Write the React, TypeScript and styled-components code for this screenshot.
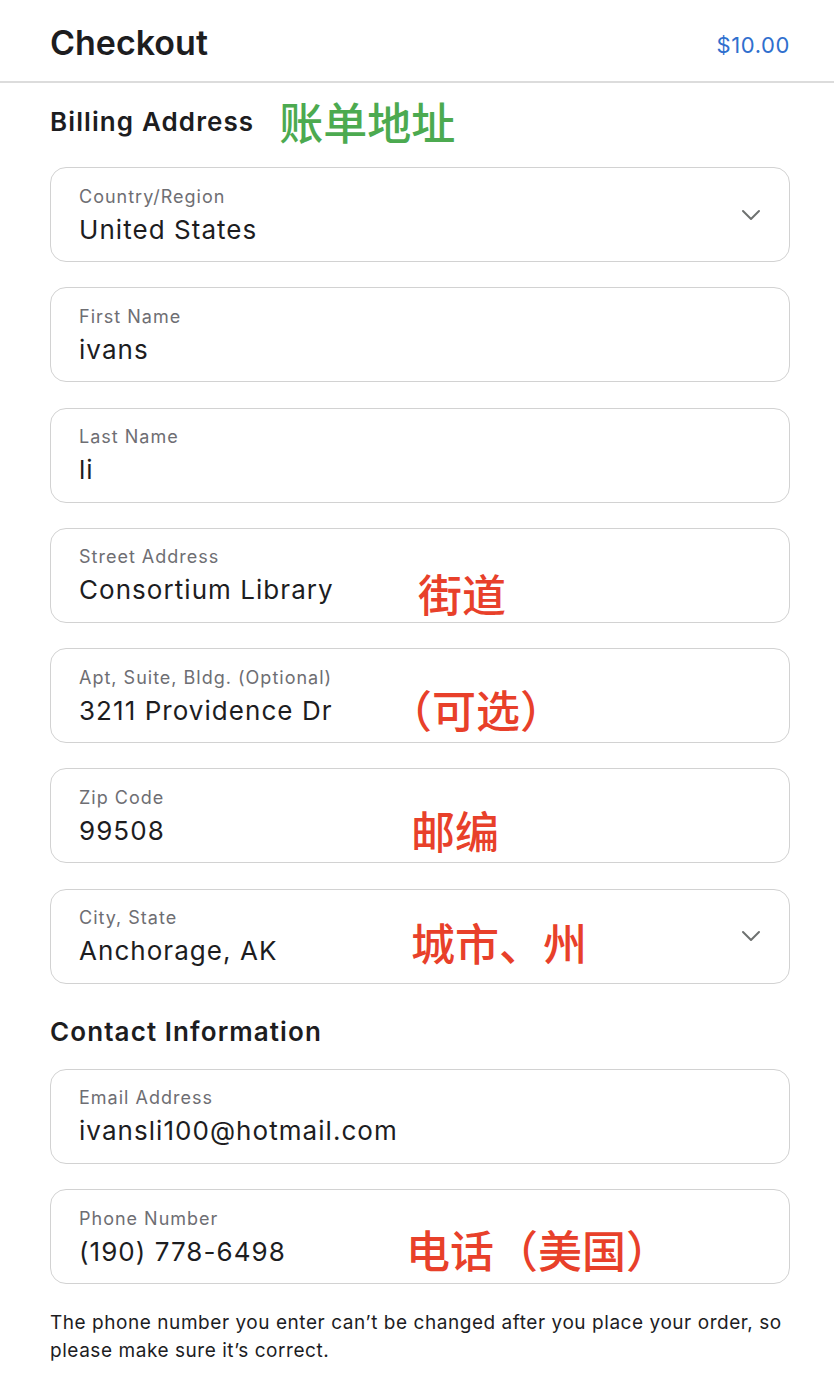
import styled, { createGlobalStyle } from "styled-components";

const GlobalStyle = createGlobalStyle`
  body {
    margin: 0;
    background: #fff;
    font-family: Inter, "Noto Sans", "Liberation Sans", "Noto Sans CJK SC", sans-serif;
    color: #1d1d1f;
  }
`;

const Page = styled.div`
  width: 834px;
`;

const Header = styled.header`
  height: 81px;
  display: flex;
  justify-content: space-between;
  align-items: center;
  padding: 0 44px 0 50px;
  border-bottom: 2px solid #dcdcdc;
`;

const Title = styled.h1`
  margin: 0;
  font-size: 34px;
  font-weight: 600;
  letter-spacing: 0;
  padding-top: 3px;
`;

const Price = styled.span`
  color: #2f6fce;
  font-size: 22px;
  letter-spacing: 0.6px;
  padding-top: 9px;
`;

const Content = styled.main`
  padding: 0 44px 0 50px;
`;

const SectionTitle = styled.h2<{ $top: number }>`
  margin: ${(p) => p.$top}px 0 0;
  height: 40px;
  display: flex;
  align-items: center;
  gap: 25px;
  font-size: 26px;
  font-weight: 600;
  letter-spacing: 1.1px;
`;

const Note = styled.span<{ $color: string }>`
  font-family: "Noto Sans CJK SC", sans-serif;
  font-size: 44px;
  font-weight: 500;
  line-height: 1.2;
  letter-spacing: 0;
  color: ${(p) => p.$color};
`;

const Fields = styled.div<{ $top: number }>`
  margin-top: ${(p) => p.$top}px;
  display: flex;
  flex-direction: column;
  gap: 25.3px;
`;

const Field = styled.div`
  position: relative;
  height: 95px;
  box-sizing: border-box;
  border: 1.5px solid #d2d2d2;
  border-radius: 16px;
  display: flex;
  align-items: center;
  padding: 0 28px;
`;

const FieldText = styled.div`
  flex: 1;
  align-self: flex-start;
  display: flex;
  flex-direction: column;
  padding-top: 16.5px;
`;

const Label = styled.span`
  font-size: 18px;
  color: #6e6e73;
  line-height: 24px;
  letter-spacing: 1px;
  margin-bottom: 3px;
`;

const Value = styled.span`
  font-size: 26px;
  color: #1d1d1f;
  line-height: 36px;
  letter-spacing: 1.05px;
`;

const Overlay = styled(Note)<{ $left: number; $center: number }>`
  position: absolute;
  left: ${(p) => p.$left}px;
  top: ${(p) => p.$center}px;
  transform: translateY(-50%);
`;

const Chevron = styled.svg`
  width: 20px;
  height: 12px;
`;

const Hint = styled.p`
  margin: 25px 0 0;
  font-size: 19px;
  line-height: 28px;
  letter-spacing: 0.55px;
  color: #1d1d1f;
`;

interface FieldData {
  label: string;
  value: string;
  note?: string;
  noteLeft?: number;
  noteCenter?: number;
  select?: boolean;
}

const billing: FieldData[] = [
  { label: "Country/Region", value: "United States", select: true },
  { label: "First Name", value: "ivans" },
  { label: "Last Name", value: "li" },
  { label: "Street Address", value: "Consortium Library", note: "街道", noteLeft: 367, noteCenter: 64 },
  { label: "Apt, Suite, Bldg. (Optional)", value: "3211 Providence Dr", note: "（可选）", noteLeft: 337, noteCenter: 60 },
  { label: "Zip Code", value: "99508", note: "邮编", noteLeft: 360, noteCenter: 61 },
  { label: "City, State", value: "Anchorage, AK", note: "城市、州", noteLeft: 360, noteCenter: 52.5, select: true },
];

const contact: FieldData[] = [
  { label: "Email Address", value: "ivansli100@hotmail.com" },
  { label: "Phone Number", value: "(190) 778-6498", note: "电话（美国）", noteLeft: 355, noteCenter: 58.5 },
];

function InputField({ f }: { f: FieldData }) {
  return (
    <Field>
      <FieldText>
        <Label>{f.label}</Label>
        <Value>{f.value}</Value>
      </FieldText>
      {f.note && (
        <Overlay $color="#e8402a" $left={f.noteLeft ?? 0} $center={f.noteCenter ?? 47}>
          {f.note}
        </Overlay>
      )}
      {f.select && (
        <Chevron viewBox="0 0 20 12">
          <path d="M2 2l8 8 8-8" fill="none" stroke="#6e7170" strokeWidth="2" strokeLinecap="round" strokeLinejoin="round" />
        </Chevron>
      )}
    </Field>
  );
}

export default function App() {
  return (
    <Page>
      <GlobalStyle />
      <Header>
        <Title>Checkout</Title>
        <Price>$10.00</Price>
      </Header>
      <Content>
        <SectionTitle $top={18}>
          Billing Address
          <Note $color="#4caa50">账单地址</Note>
        </SectionTitle>
        <Fields $top={26}>
          {billing.map((f) => (
            <InputField key={f.label} f={f} />
          ))}
        </Fields>
        <SectionTitle $top={28}>Contact Information</SectionTitle>
        <Fields $top={17}>
          {contact.map((f) => (
            <InputField key={f.label} f={f} />
          ))}
        </Fields>
        <Hint>
          The phone number you enter can’t be changed after you place your order, so please make sure it’s correct.
        </Hint>
      </Content>
    </Page>
  );
}
